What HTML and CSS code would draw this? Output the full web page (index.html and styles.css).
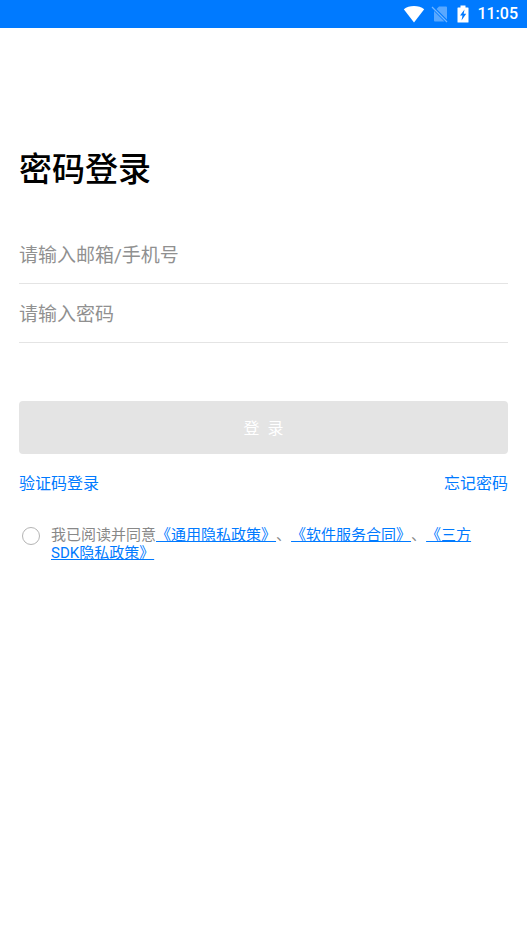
FILE: index.html
```html
<!DOCTYPE html>
<html lang="zh-CN">
<head>
<meta charset="utf-8">
<meta name="viewport" content="width=device-width, initial-scale=1">
<title>密码登录</title>
<link rel="stylesheet" href="styles.css">
</head>
<body>
<header class="status-bar">
  <svg class="wifi" viewBox="0 0 22 18" aria-hidden="true"><path d="M11 17.500 0.800 4.200Q5 1 11 1t10.200 3.200Z" fill="#fff"/></svg>
  <svg class="sim" viewBox="0 0 18 18" aria-hidden="true"><path d="M8 1.500h7q1 0 1 1v12L5.500 4ZM3 6l10.500 10.500H4q-1 0-1-1Z" fill="#fff" opacity=".35"/><path d="M1 2l15 15" stroke="#fff" stroke-width="1.200" opacity=".45"/></svg>
  <svg class="battery" viewBox="0 0 12 18" aria-hidden="true"><path d="M3.500 0.500h5v2h2.500q0.500 0 .5.500v14q0 .5-.5.500h-10q-.5 0-.5-.5v-14q0-.5.500-.5H3.500Z" fill="#fff"/><path d="M7.500 4.500 3 10.500h2.500L4.500 15.500 9.200 8.800H6.700Z" fill="#007aff"/></svg>
  <time class="clock">11:05</time>
</header>
<main class="login">
  <h1 class="title">密码登录</h1>
  <form>
    <input class="field" type="text" placeholder="请输入邮箱/手机号" aria-label="邮箱/手机号">
    <input class="field" type="password" placeholder="请输入密码" aria-label="密码">
    <button class="submit" type="button" disabled>登&nbsp; 录</button>
    <nav class="links">
      <a href="#code">验证码登录</a>
      <a href="#forgot">忘记密码</a>
    </nav>
    <div class="agreement">
      <input class="check" type="checkbox" id="agree">
      <p class="terms"><label for="agree">我已阅读并同意</label><a href="#privacy">《通用隐私政策》</a>、<a href="#service">《软件服务合同》</a>、<a href="#sdk">《三方SDK隐私政策》</a></p>
    </div>
  </form>
</main>
</body>
</html>
```
FILE: styles.css
```css
* {
  box-sizing: border-box;
}

body {
  margin: 0;
  background: #fff;
  color: #000;
  font-family: Roboto, "Noto Sans CJK SC", sans-serif;
}

a {
  color: #007aff;
}

.status-bar {
  display: flex;
  align-items: center;
  justify-content: flex-end;
  height: 28px;
  padding-right: 9px;
  background: #007aff;
}

.wifi {
  width: 22px;
  height: 18px;
  margin-right: 6px;
}

.sim {
  width: 18px;
  height: 18px;
  margin-right: 8px;
}

.battery {
  width: 12px;
  height: 18px;
  margin-right: 8px;
}

.clock {
  color: #fff;
  font-size: 16px;
  font-weight: 500;
  line-height: 30px;
}

.login {
  padding: 118px 19px 0;
}

.title {
  margin: 0 0 31px;
  font-size: 33px;
  font-weight: 500;
  line-height: 48px;
}

.field {
  display: block;
  width: 100%;
  height: 59px;
  padding: 2px 0 0;
  border: 0;
  border-bottom: 1px solid #e4e4e4;
  border-radius: 0;
  outline: 0;
  background: none;
  font: inherit;
  font-size: 19px;
}

.field::placeholder {
  color: #909090;
  opacity: 1;
}

.submit {
  display: block;
  width: 100%;
  height: 53px;
  margin-top: 58px;
  padding: 0 0 2px;
  border: 0;
  border-radius: 4px;
  background: #e4e4e4;
  color: #fff;
  font: inherit;
  font-size: 16px;
}

.links {
  display: flex;
  justify-content: space-between;
  margin-top: 18px;
  font-size: 16px;
  line-height: 24px;
}

.links a {
  text-decoration: none;
}

.agreement {
  display: flex;
  align-items: flex-start;
  gap: 11px;
  margin-top: 30px;
  padding: 0 19px 0 3px;
}

.check {
  flex: none;
  width: 18px;
  height: 18px;
  margin: 1px 0 0;
  border: 1px solid #b4b4b4;
  border-radius: 50%;
  appearance: none;
}

.check:checked {
  border-color: #007aff;
  background: #007aff;
}

.terms {
  margin: 0;
  color: #888;
  font-size: 15px;
  line-height: 18px;
  text-spacing-trim: space-all;
}
```
